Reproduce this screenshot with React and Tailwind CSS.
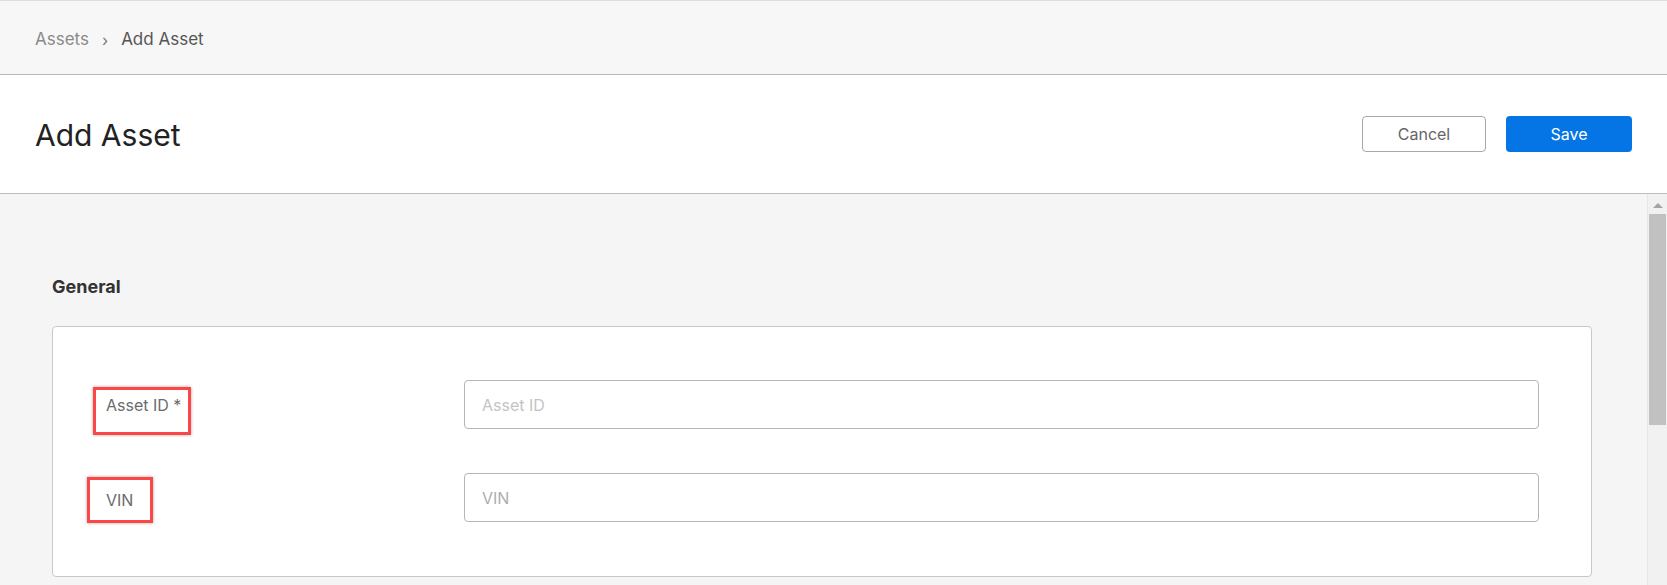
export default function App() {
  return (
    <div className="w-[1667px] h-[585px] overflow-hidden bg-[#f5f5f5] font-['Inter','Noto_Sans',sans-serif]">
      {/* Breadcrumb */}
      <div className="h-[75px] flex items-center px-[35px] pt-[4px] bg-[#f7f7f7] border-t border-b border-t-[#dedede] border-b-[#b9b9b9] text-[17px]">
        <span className="text-[#8a8a8a]">Assets</span>
        <span className="mx-[13px] text-[#777] text-[16px]">›</span>
        <span className="text-[#555]">Add Asset</span>
      </div>

      {/* Header */}
      <div className="h-[119px] flex items-center justify-between px-[35px] bg-white border-b border-[#bdbdbd]">
        <h1 className="text-[30px] text-[#222] font-normal pt-[2px]">Add Asset</h1>
        <div className="flex gap-[20px]">
          <button className="w-[124px] h-[36px] rounded-[4px] border border-[#a9a9a9] bg-white text-[16px] text-[#666]">
            Cancel
          </button>
          <button className="w-[126px] h-[36px] rounded-[4px] bg-[#0574e4] text-[16px] text-white">
            Save
          </button>
        </div>
      </div>

      {/* Content */}
      <div className="flex h-[391px]">
        <div className="flex-1 pl-[52px] pr-[55px] pt-[81px]">
          <h2 className="text-[18px] leading-[24px] font-bold text-[#333]">General</h2>
          <div className="mt-[27px] bg-white border border-[#c8c8c8] rounded-[4px] pt-[53px] pb-[54px] pr-[52px] flex flex-col gap-[44px]">
            <div className="flex items-start h-[49px]">
              <div className="w-[411px] shrink-0">
                <div className="ml-[40px] mt-[7px] inline-block border-[3px] border-[#ff4646] shadow-[0_0_3px_rgba(0,0,0,0.35)] pl-[10px] pr-[7px] pt-[3px] pb-[15px]">
                  <span className="block text-[16px] leading-[24px] text-[#6b6b6b]">Asset ID *</span>
                </div>
              </div>
              <input
                placeholder="Asset ID"
                className="flex-1 h-[49px] rounded-[4px] border border-[#b5b5b5] pl-[17px] text-[16px] outline-none placeholder:text-[#c4c4c4]"
              />
            </div>
            <div className="flex items-start h-[49px]">
              <div className="w-[411px] shrink-0">
                <div className="ml-[34px] mt-[4px] inline-block border-[3px] border-[#ff4646] shadow-[0_0_3px_rgba(0,0,0,0.35)] pl-[16px] pr-[17px] py-[8px]">
                  <span className="block text-[16px] leading-[24px] text-[#6b6b6b]">VIN</span>
                </div>
              </div>
              <input
                placeholder="VIN"
                className="flex-1 h-[49px] rounded-[4px] border border-[#b5b5b5] pl-[17px] text-[16px] outline-none placeholder:text-[#adadad]"
              />
            </div>
          </div>
        </div>

        {/* Scrollbar */}
        <div className="w-[20px] bg-[#f1f1f1] border-l border-[#e6e6e6] flex flex-col items-center">
          <div className="mt-[9px] w-0 h-0 border-l-[5px] border-r-[5px] border-b-[5px] border-l-transparent border-r-transparent border-b-[#a3a3a3]"></div>
          <div className="mt-[6px] w-[17px] h-[211px] bg-[#c1c1c1]"></div>
        </div>
      </div>
    </div>
  );
}
